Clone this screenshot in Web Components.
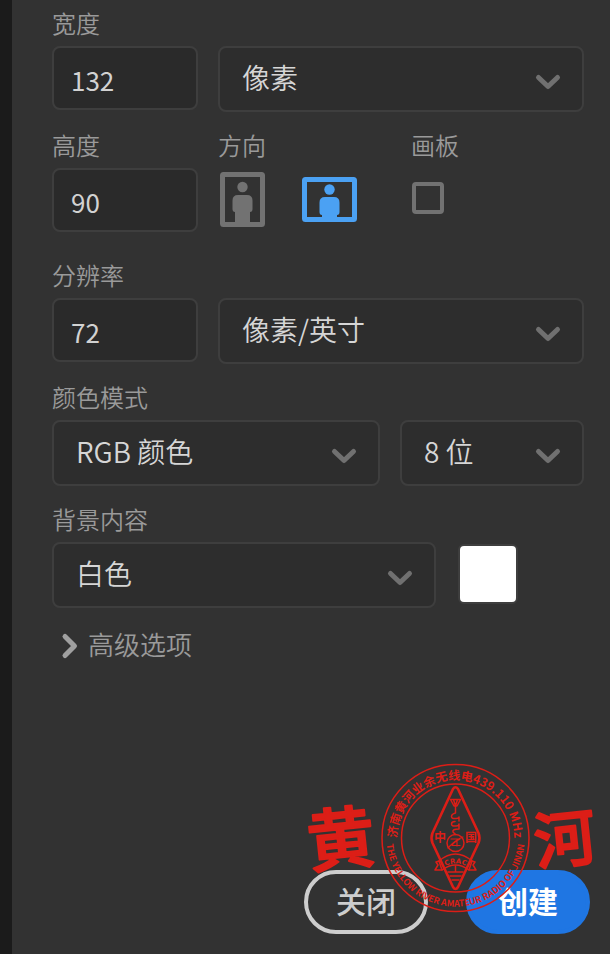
<!DOCTYPE html>
<html lang="zh-CN">
<head>
<meta charset="utf-8">
<title>新建文档</title>
<style>
html, body { margin: 0; min-height: 100%; background: #323232; }
body { font-family: "Noto Sans CJK SC", "Noto Sans", sans-serif; color: #cfcfcf; }
</style>
</head>
<body>
<doc-panel>
  <form-row cols="146px 1fr">
    <text-field label="宽度" value="132"></text-field>
    <select-field name="宽度单位" options="像素|英寸|厘米"></select-field>
  </form-row>
  <form-row cols="146px 173px 1fr" tall>
    <text-field label="高度" value="90"></text-field>
    <orientation-field label="方向"></orientation-field>
    <check-field label="画板"></check-field>
  </form-row>
  <form-row cols="146px 1fr">
    <text-field label="分辨率" value="72"></text-field>
    <select-field name="分辨率单位" options="像素/英寸|像素/厘米"></select-field>
  </form-row>
  <form-row cols="1fr 184px">
    <select-field label="颜色模式" options="RGB 颜色|灰度|CMYK 颜色"></select-field>
    <select-field name="位深度" options="8 位|16 位|32 位"></select-field>
  </form-row>
  <form-row cols="1fr 128px">
    <select-field label="背景内容" options="白色|黑色|透明"></select-field>
    <color-swatch name="背景颜色"></color-swatch>
  </form-row>
  <disclosure-row>高级选项</disclosure-row>
  <action-button slot="footer">关闭</action-button>
  <action-button slot="footer" primary>创建</action-button>
  <club-mark slot="mark"></club-mark>
</doc-panel>

<script>
const BASE = `
  *, *::before { box-sizing: border-box; }
  :host { display: block; min-width: 0; }
  :host([hidden]) { display: none; }
  .label { display: block; height: 34px; line-height: 34px; margin-bottom: 6px;
    font-size: 24px; font-weight: 350; color: #9a9a9a; white-space: nowrap; }
  button, input, select { font: inherit; color: inherit; margin: 0; }
`;

function define(name, render) {
  customElements.define(name, class extends HTMLElement {
    connectedCallback() {
      if (this.shadowRoot) return;
      const t = document.createElement('template');
      const { css, html } = render(this);
      t.innerHTML = `<style>${BASE}${css}</style>${html}`;
      this.attachShadow({ mode: 'open' }).append(t.content.cloneNode(true));
    }
  });
}

define('doc-panel', () => ({
  css: `
    :host { position: relative; display: flex; flex-direction: column; box-sizing: border-box;
      min-height: 100vh; padding: 6px 26px 20px 40px; border-left: 12px solid #1b1b1b; background: #323232; }
    footer { display: flex; justify-content: flex-end; gap: 38px; margin-top: auto; margin-right: -6px; }
    ::slotted(club-mark) { position: absolute; right: 10px; bottom: 34px; pointer-events: none; }
  `,
  html: `<slot></slot><footer><slot name="footer"></slot></footer><slot name="mark"></slot>`
}));

define('form-row', el => ({
  css: `
    :host { display: grid; grid-template-columns: ${el.getAttribute('cols')}; gap: 20px;
      min-height: 106px; margin-bottom: 16px; align-items: start; }
    :host([tall]) { margin-bottom: 24px; }
  `,
  html: `<slot></slot>`
}));

define('text-field', el => ({
  css: `
    input { display: block; width: 100%; height: 64px; padding: 2px 17px 0; border: 2px solid #3e3e3e;
      border-radius: 8px; background: #2a2a2a; font-size: 26px; font-weight: 400; line-height: 40px; color: #d2d2d2; outline: none; }
    input:focus-visible { border-color: #4ba1f3; }
  `,
  html: `<label class="label" for="i">${el.getAttribute('label')}</label>
    <input id="i" type="text" inputmode="numeric" value="${el.getAttribute('value')}">`
}));

define('select-field', el => {
  const label = el.getAttribute('label');
  const options = el.getAttribute('options').split('|').map(o => `<option>${o}</option>`).join('');
  return {
    css: `
      :host(:not([label])) { padding-top: 40px; }
      .box { display: grid; align-items: center; }
      select, svg { grid-area: 1 / 1; }
      select { appearance: none; width: 100%; height: 66px; padding: 0 56px 4px 22px; border: 2px solid #3e3e3e;
        border-radius: 8px; background: #2d2d2d; font-size: 28px; font-weight: 350; line-height: 40px; color: #d6d6d6; outline: none; }
      select:focus-visible { border-color: #4ba1f3; }
      svg { justify-self: end; margin: 6px 22px 0 0; pointer-events: none; }
    `,
    html: `${label ? `<label class="label" for="s">${label}</label>` : ''}
      <div class="box">
        <select id="s" ${label ? '' : `aria-label="${el.getAttribute('name')}"`}>${options}</select>
        <svg width="28" height="18" viewBox="0 0 28 18" aria-hidden="true"><path d="M4.5 4.5 14 13.5 23.5 4.5" fill="none" stroke="#707070" stroke-width="5" stroke-linecap="round" stroke-linejoin="round"/></svg>
      </div>`
  };
});

define('orientation-field', el => ({
  css: `
    .pair { display: flex; align-items: center; gap: 36px; height: 64px; padding-left: 2px; }
    button { display: block; padding: 0; border: 0; background: none; color: #727272; }
    button[aria-pressed="true"] { color: #4ba1f3; }
    svg { display: block; }
  `,
  html: `<span class="label" id="l">${el.getAttribute('label')}</span>
    <div class="pair" role="group" aria-labelledby="l">
      <button type="button" aria-label="纵向" aria-pressed="false">
        <svg width="46" height="56" viewBox="0 0 46 56"><rect x="2.5" y="2.5" width="40" height="50" rx="1" fill="none" stroke="currentColor" stroke-width="5"/><circle cx="22.5" cy="15" r="5.2" fill="currentColor"/><path d="M18 23H27Q32.500 23 32.500 28.500V37Q32.500 40 30 40V52H15V40Q12.500 40 12.500 37V28.500Q12.500 23 18 23Z" fill="currentColor"/></svg>
      </button>
      <button type="button" aria-label="横向" aria-pressed="true">
        <svg width="56" height="46" viewBox="0 0 56 46"><rect x="2.5" y="2.5" width="50" height="40" rx="1" fill="none" stroke="currentColor" stroke-width="5"/><circle cx="27.5" cy="12.500" r="5.200" fill="currentColor"/><path d="M23 20H32Q37.500 20 37.500 25.500V35Q37.500 37.800 35 38V42H20V38Q17.500 37.800 17.500 35V25.500Q17.500 20 23 20Z" fill="currentColor"/></svg>
      </button>
    </div>`
}));

define('check-field', el => ({
  css: `
    .box { display: flex; align-items: center; height: 60px; }
    input { appearance: none; width: 32px; height: 32px; margin-left: 1px; border: 4px solid #727272; border-radius: 4px; }
    input:checked { background: #727272; }
  `,
  html: `<label class="label" for="c">${el.getAttribute('label')}</label>
    <div class="box"><input id="c" type="checkbox"></div>`
}));

define('color-swatch', el => ({
  css: `
    :host { padding: 42px 0 0 2px; }
    button { display: block; width: 60px; height: 60px; border: 2px solid #3e3e3e; border-radius: 6px; background: #fff; }
  `,
  html: `<button type="button" aria-label="${el.getAttribute('name')}"></button>`
}));

define('disclosure-row', () => ({
  css: `
    button { display: flex; align-items: center; gap: 8px; height: 40px; padding: 0 0 0 8px; border: 0;
      background: none; font-size: 26px; line-height: 38px; font-weight: 350; color: #9a9a9a; }
    svg { margin-top: 4px; }
  `,
  html: `<button type="button" aria-expanded="false"><svg width="20" height="28" viewBox="0 0 20 28" aria-hidden="true"><path d="M5 4.500 14.500 14 5 23.500" fill="none" stroke="#a0a0a0" stroke-width="5" stroke-linecap="round" stroke-linejoin="round"/></svg><span><slot></slot></span></button>`
}));

define('action-button', () => ({
  css: `
    button { display: block; min-width: 124px; height: 64px; padding: 0 25px 4px; border: 4px solid #cdcdcd; border-radius: 32px;
      background: transparent; font-size: 30px; line-height: 44px; font-weight: 500; color: #cdcdcd; white-space: nowrap; }
    :host([primary]) button { border-color: #1f76e3; background: #1f76e3; color: #fff; font-weight: 700; }
  `,
  html: `<button type="button"><slot></slot></button>`
}));

define('club-mark', () => ({
  css: `
    svg { display: block; overflow: visible; }
    text { font-family: "Noto Sans CJK SC", sans-serif; fill: #dc1e17; }
    .brush { font-size: 68px; font-weight: 500; stroke: #dc1e17; stroke-width: 2px; stroke-linejoin: round; }
    .brush.small { font-size: 62px; }
    .ring { font-size: 12px; font-weight: 700; }
    .latin { font-size: 9px; font-weight: 700; }
    .core { font-size: 12px; font-weight: 700; }
    .band { font-family: "DejaVu Sans", sans-serif; font-size: 7px; font-weight: 700; }
  `,
  html: `<svg width="300" height="160" viewBox="0 0 300 160" role="img" aria-label="济南黄河业余无线电">
    <defs>
      <path id="top" d="M97 82A58.600 58.600 0 1 1 214 82"/>
      <path id="bottom" d="M86.700 70A69.200 69.200 0 1 0 224.300 70"/>
      <path id="band" d="M140 109Q155.500 98 171 109"/>
    </defs>
    <text class="brush" x="7" y="104" transform="rotate(-6 41 80)">黄</text>
    <text class="brush small" x="234" y="102" transform="rotate(-6 265 80)">河</text>
    <g fill="none" stroke="#dc1e17" stroke-width="1.500" stroke-linejoin="round" stroke-linecap="round">
      <circle cx="155.500" cy="78" r="73.500"/>
      <circle cx="155.500" cy="78" r="54"/>
      <path stroke-width="2.600" d="M153 29Q155.500 25.500 158 29L178.500 73Q180.500 78 178.500 83L158 127Q155.500 131 153 127L132.500 83Q130.500 78 132.500 73Z"/>
      <path d="M150.500 39.500H160.500L157 46H154ZM153.500 39.500 155.500 46 157.500 39.500M155.500 46V53Q151.500 54 151.500 56.500T156 58.500Q159 58.500 159 57V61M155 61.500Q151.500 61.500 151.500 64T156 66Q159 66 159 64V69Q152 69 153 72L155.500 74.500"/>
      <circle cx="155.500" cy="83" r="8.500"/>
      <path stroke-width="1.200" d="M151 79H160Q154 82 152 85.500H160M148 88Q155 80 163 77M157 79V86"/>
      <path d="M139 101Q155.500 87 172 101L169 110Q155.500 100 142 110Z"/>
      <path d="M139 101 136 102 138 105 135 110 142 110M172 101 175 102 173 105 176 110 169 110M155.500 106V112M148 112H163M150 116H161M152 120H159"/>
    </g>
    <text class="core" x="134" y="82">中</text>
    <text class="core" x="165" y="82">国</text>
    <text class="band" text-anchor="middle"><textPath href="#band" startOffset="50%">CRAC</textPath></text>
    <text class="ring" text-anchor="middle"><textPath href="#top" startOffset="50%">济南黄河业余无线电439.110 MHz</textPath></text>
    <text class="latin" text-anchor="middle"><textPath href="#bottom" startOffset="50%">THE YELLOW RIVER AMATEUR RADIO OF JINAN</textPath></text>
  </svg>`
}));
</script>
</body>
</html>
